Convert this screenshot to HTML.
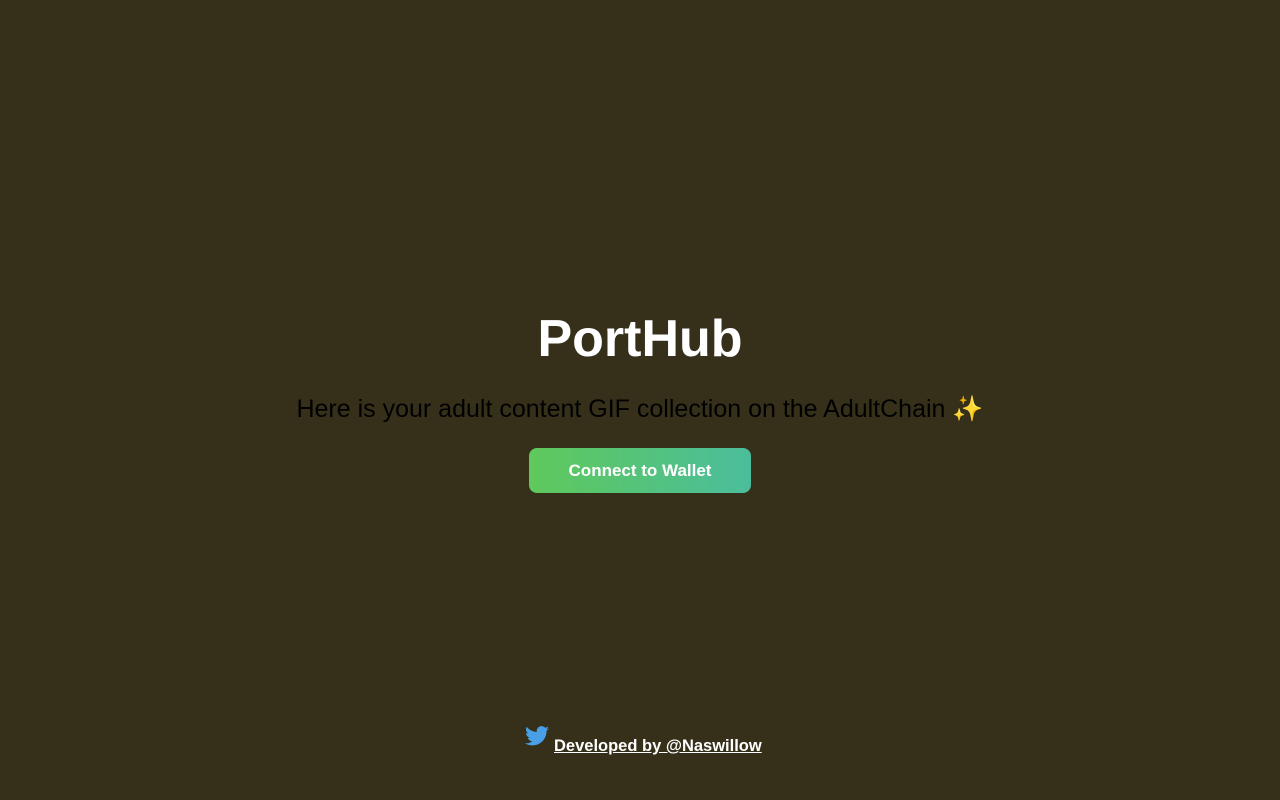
<!DOCTYPE html>
<html><head><style>
body{margin:0;background:#36301a;width:1280px;height:800px;font-family:"Liberation Sans",sans-serif;position:relative;overflow:hidden}
h1{position:absolute;top:309px;left:0;width:1280px;text-align:center;margin:0;color:#fff;font-size:52px;font-weight:bold;line-height:60px}
p{position:absolute;top:394px;left:0;width:1280px;text-align:center;margin:0;color:#000;font-size:25px;line-height:30px}
.btn{position:absolute;left:529px;top:448px;width:222px;height:45px;border-radius:8px;background:linear-gradient(to right,#5fc95b,#4bbd9c);color:#fff;font-weight:bold;font-size:17px;line-height:45px;text-align:center}
.f{position:absolute;left:525px;top:726px;color:#fff;font-weight:bold;font-size:16.5px}
.f a{color:#fff;text-decoration:underline;position:relative;top:5px;left:5px}
</style></head><body>
<h1>PortHub</h1>
<p>Here is your adult content GIF collection on the AdultChain <span style="color:#f5c518">✨</span></p>
<div class="btn">Connect to Wallet</div>
<div class="f"><svg width="24" height="20" viewBox="0 0 24 20"><path fill="#4aa0e6" d="M24 2.4a9.8 9.8 0 0 1-2.8.8A4.9 4.9 0 0 0 23.3.5a9.9 9.9 0 0 1-3.1 1.2A4.9 4.9 0 0 0 11.8 6 14 14 0 0 1 1.7.9a4.9 4.9 0 0 0 1.5 6.6A4.9 4.9 0 0 1 1 6.9a4.9 4.9 0 0 0 3.9 4.8 4.9 4.9 0 0 1-2.2.1 4.9 4.9 0 0 0 4.6 3.4A9.9 9.9 0 0 1 0 17.2 14 14 0 0 0 7.5 19.4c9 0 14-7.5 14-14v-.6A10 10 0 0 0 24 2.4z"/></svg><a>Developed by @Naswillow</a></div>
</body></html>
